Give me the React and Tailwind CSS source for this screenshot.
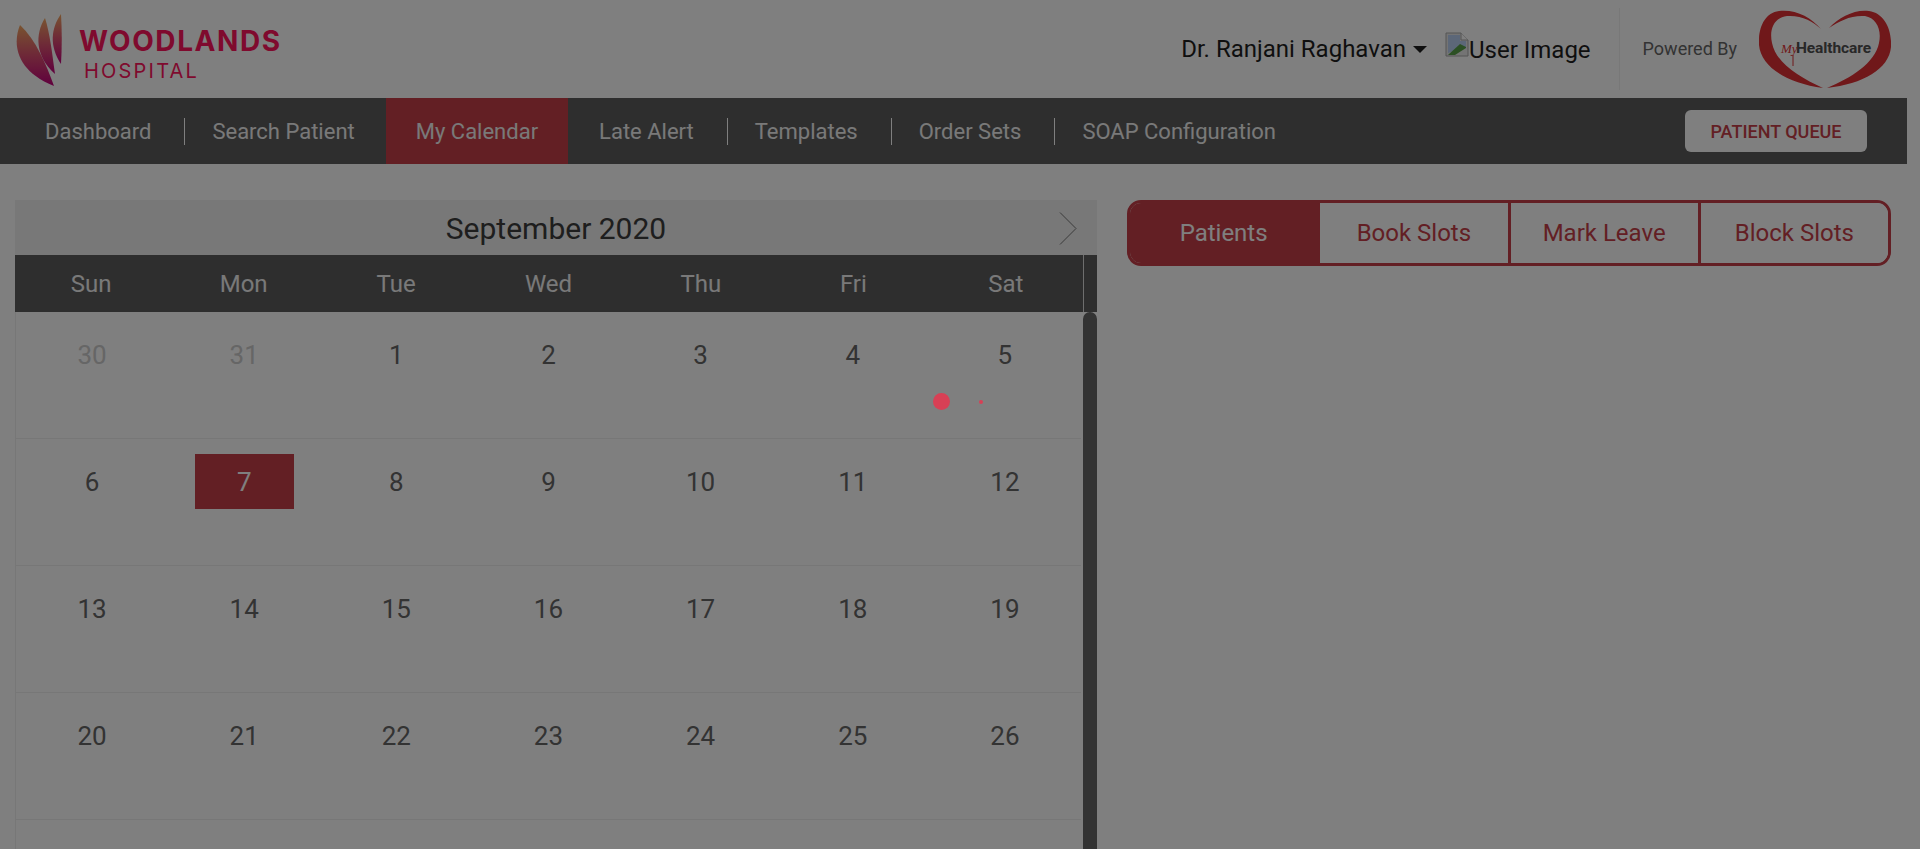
const navItems = [
  { label: 'Dashboard', sep: true, pad: 'px-[30px]' },
  { label: 'Search Patient', pad: 'pl-[30px] pr-[31px]' },
  { label: 'My Calendar', active: true, pad: 'px-[30px]' },
  { label: 'Late Alert', sep: true, pad: 'pl-[31px] pr-[30px]' },
  { label: 'Templates', sep: true, pad: 'px-[30px]' },
  { label: 'Order Sets', sep: true, pad: 'px-[30px]' },
  { label: 'SOAP Configuration', pad: 'px-[30px]' },
]

const weekDays = ['Sun', 'Mon', 'Tue', 'Wed', 'Thu', 'Fri', 'Sat']
const days = [30, 31, 1, 2, 3, 4, 5, 6, 7, 8, 9, 10, 11, 12, 13, 14, 15, 16, 17, 18, 19, 20, 21, 22, 23, 24, 25, 26, 27, 28, 29, 30]
const tabs = ['Patients', 'Book Slots', 'Mark Leave', 'Block Slots']

function WoodlandsLogo() {
  return (
    <div className="flex items-center pl-4">
      <svg width="50" height="76" viewBox="0 0 50 76" className="mt-[2px]">
        <defs>
          <linearGradient id="petal" x1="0" y1="0" x2="0" y2="1">
            <stop offset="0" stopColor="#f2a860" />
            <stop offset="0.5" stopColor="#dc5070" />
            <stop offset="1" stopColor="#c0007c" />
          </linearGradient>
        </defs>
        <path d="M4 13C-3 30 -2 58 38 74C30 52 20 28 4 13Z" fill="url(#petal)" />
        <path d="M29 6C19 22 19 44 39 62C36 40 34 22 29 6Z" fill="url(#petal)" />
        <path d="M45 2C35 16 33 34 45 52C46 36 46 18 45 2Z" fill="url(#petal)" />
      </svg>
      <div className="ml-[13px] mt-[11px] font-['Inter',sans-serif] text-[#fe145c]">
        <div className="text-[28px] leading-[28px] font-bold tracking-[1.6px]">WOODLANDS</div>
        <div className="ml-[5px] mt-[4px] text-[20px] leading-[24px] tracking-[2.2px]">HOSPITAL</div>
      </div>
    </div>
  )
}

function BrokenImage() {
  return (
    <svg width="24" height="25" viewBox="0 0 24 25" className="shrink-0">
      <path d="M1 1H16L23 8V24H1Z" fill="#e8e8e8" stroke="#a8a8a8" />
      <path d="M3 3H15V9H21V15L3 21Z" fill="#b8cff0" />
      <path d="M3 23L15 12L21 15V16L10 23Z" fill="#58a048" />
      <path d="M16 1V8H23" fill="#fff" stroke="#a8a8a8" />
    </svg>
  )
}

function MyHealthcareLogo() {
  return (
    <div className="relative h-[80px] w-[132px]">
      <svg width="132" height="80" viewBox="0 0 132 80">
        <path
          d="M62 20C52 8 36 0 20 2C5 4 -1 20 0 36C2 58 28 74 64 79C40 68 17 54 13 34C10 20 15 9 28 7C42 6 54 12 62 20Z"
          fill="#e03034"
        />
        <path
          d="M70 19C80 8 96 0 110 2C125 4 133 20 132 38C130 60 104 75 68 79C92 69 116 54 120 34C123 20 117 9 106 7C92 6 80 12 70 19Z"
          fill="#e03034"
        />
        <path d="M34 46V57" stroke="#e03034" strokeWidth="1" fill="none" />
      </svg>
      <div className="absolute left-[22px] top-[29px] flex items-baseline font-['Roboto',sans-serif] leading-[20px]">
        <span className="w-[15px] font-['Liberation_Serif',serif] text-[13px] italic text-[#e03034]">My</span>
        <span className="text-[15.5px] font-bold tracking-[-0.1px] text-[#505050]">Healthcare</span>
      </div>
    </div>
  )
}

function Header() {
  return (
    <header className="flex h-[98px] items-center justify-between">
      <WoodlandsLogo />
      <div className="flex items-center">
        <span className="text-[24px] text-[#1e1e1e]">Dr. Ranjani Raghavan</span>
        <span className="ml-[7px] h-0 w-0 border-x-[7px] border-t-[7px] border-x-transparent border-t-[#1e1e1e]" />
        <div className="ml-[18px] flex items-start">
          <BrokenImage />
          <span className="mt-[1px] text-[24px] leading-[34px] text-[#1e1e1e]">User Image</span>
        </div>
        <div className="ml-[28px] h-[82px] w-px bg-[#f0f0f0]" />
        <span className="ml-[23px] mb-[2px] text-[18px] text-[#666666]">Powered By</span>
        <div className="ml-[22px] mr-[16px]">
          <MyHealthcareLogo />
        </div>
      </div>
    </header>
  )
}

function NavBar() {
  return (
    <nav className="flex h-[66px] items-center justify-between bg-[#5c5c5c] pl-[15px] pr-[40px]">
      <ul className="flex h-full items-center">
        {navItems.map((item) => (
          <li key={item.label} className="flex h-full items-center">
            <a className={`flex h-full items-center pt-[1px] text-[22px] text-[#f2f2f2] ${item.pad} ${item.active ? 'bg-[#c63f48]' : ''}`}>
              {item.label}
            </a>
            {item.sep && <span className="ml-[3px] -mr-[3px] h-[27px] w-px bg-white" />}
          </li>
        ))}
      </ul>
      <button className="h-[42px] w-[182px] rounded-[6px] bg-white text-[18px] font-medium text-[#c63f48]">
        PATIENT QUEUE
      </button>
    </nav>
  )
}

function Calendar() {
  return (
    <section className="w-[1082px] shrink-0">
      <div className="relative flex h-[55px] items-center justify-center bg-[#f0f0f0]">
        <h2 className="pt-[1px] text-[30px] text-[#3c3c3c]">September 2020</h2>
        <svg width="18" height="33" viewBox="0 0 18 33" className="absolute right-[20px] top-[12px]" fill="none" stroke="#777777" strokeWidth="1">
          <path d="M1 0.5L17 16.5L1 32.5" />
        </svg>
      </div>
      <div className="flex h-[57px] bg-[#5c5c5c]">
        <div className="w-[1069px] border-r border-[#dddddd]">
          <div className="grid h-full w-[1067px] grid-cols-7 items-center">
            {weekDays.map((d) => (
              <div key={d} className="text-center text-[24px] text-[#f2f2f2]">{d}</div>
            ))}
          </div>
        </div>
      </div>
      <div className="flex items-start">
        <div className="grid w-[1066px] grid-cols-7 border-l border-[#eeeeee]">
          {days.map((d, i) => (
            <div key={i} className="h-[127px] border-b border-[#eeeeee] pt-[15px]">
              <div
                className={`mx-auto flex h-[55px] w-[99px] items-center justify-center text-[26px] leading-none ${
                  i === 8 ? 'bg-[#c63f48] text-white' : i < 2 ? 'text-[#cccccc]' : 'text-[#666666]'
                }`}
              >
                {d}
              </div>
            </div>
          ))}
        </div>
        <div className="ml-[2px] h-[700px] w-[14px] rounded-t-[7px] bg-[#666666]" />
      </div>
    </section>
  )
}

function SlotTabs() {
  return (
    <div className="flex h-[66px] w-[764px] overflow-hidden rounded-[14px] border-[3px] border-[#c63f48]">
      {tabs.map((t, i) => (
        <button
          key={t}
          className={`h-full flex-1 text-[24px] ${i === 0 ? 'bg-[#c63f48] text-white' : 'border-l-[3px] border-[#c63f48] bg-white text-[#c63f48]'}`}
        >
          {t}
        </button>
      ))}
    </div>
  )
}

export default function App() {
  return (
    <div className="h-screen overflow-hidden bg-white font-['Roboto',sans-serif]">
      <div className="w-[1907px]">
        <Header />
        <NavBar />
        <main className="flex gap-[30px] pl-[15px] pt-[36px]">
          <Calendar />
          <SlotTabs />
        </main>
      </div>

      {/* backdrop + loader dots */}
      <div className="fixed inset-0 bg-black/50">
        <span className="absolute left-[933px] top-[393px] h-[17px] w-[17px] rounded-full bg-[#d84055]" />
        <span className="absolute left-[979px] top-[400px] h-[4px] w-[4px] rounded-full bg-[#d84055]" />
      </div>
    </div>
  )
}
